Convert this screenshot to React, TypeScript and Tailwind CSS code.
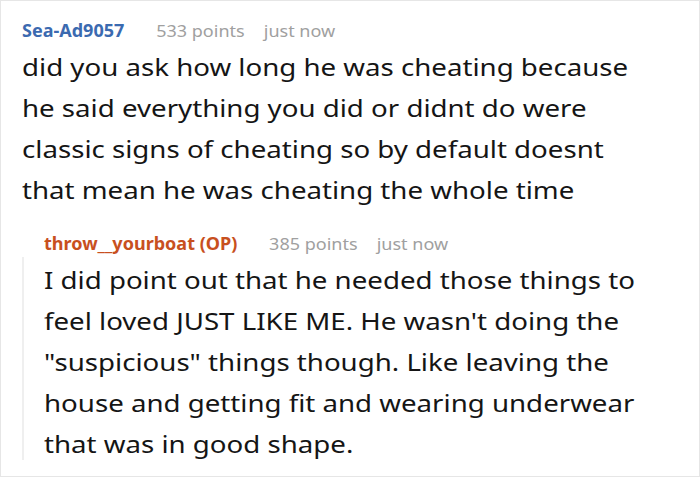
import React from "react";

export default function App() {
  return (
    <div
      className="w-[700px] h-[477px] bg-white border border-[#e6e6e6] overflow-hidden"
      style={{ fontFamily: '"Noto Sans", sans-serif' }}
    >
      <div className="pl-[21px] pt-[17px]">
        <div className="flex items-baseline text-[17px] leading-[26px] origin-left [transform:scaleX(1.06)]">
          <span className="font-bold text-[#3b6ab0]">Sea-Ad9057</span>
          <span className="ml-[30px] text-[#a0a0a0]">533 points</span>
          <span className="ml-[18px] text-[#a0a0a0]">just now</span>
        </div>
        <p className="text-[24px] leading-[41px] text-[#151515] mt-[2px] origin-left [transform:scaleX(1.152)] whitespace-nowrap">
          did you ask how long he was cheating because
          <br />
          he said everything you did or didnt do were
          <br />
          classic signs of cheating so by default doesnt
          <br />
          that mean he was cheating the whole time
        </p>
        <div className="flex mt-[21px]">
          <div className="w-[2px] bg-[#efefef] mt-[26px] mb-[4px]" />
          <div className="pl-[20px]">
            <div className="flex items-baseline text-[17px] leading-[26px] origin-left [transform:scaleX(1.06)]">
              <span className="font-bold text-[#c8501e]">throw__yourboat (OP)</span>
              <span className="ml-[30px] text-[#a0a0a0]">385 points</span>
              <span className="ml-[18px] text-[#a0a0a0]">just now</span>
            </div>
            <p className="text-[24px] leading-[41px] text-[#151515] mt-[2px] origin-left [transform:scaleX(1.152)] whitespace-nowrap">
              I did point out that he needed those things to
              <br />
              feel loved JUST LIKE ME. He wasn't doing the
              <br />
              "suspicious" things though. Like leaving the
              <br />
              house and getting fit and wearing underwear
              <br />
              that was in good shape.
            </p>
          </div>
        </div>
      </div>
    </div>
  );
}
